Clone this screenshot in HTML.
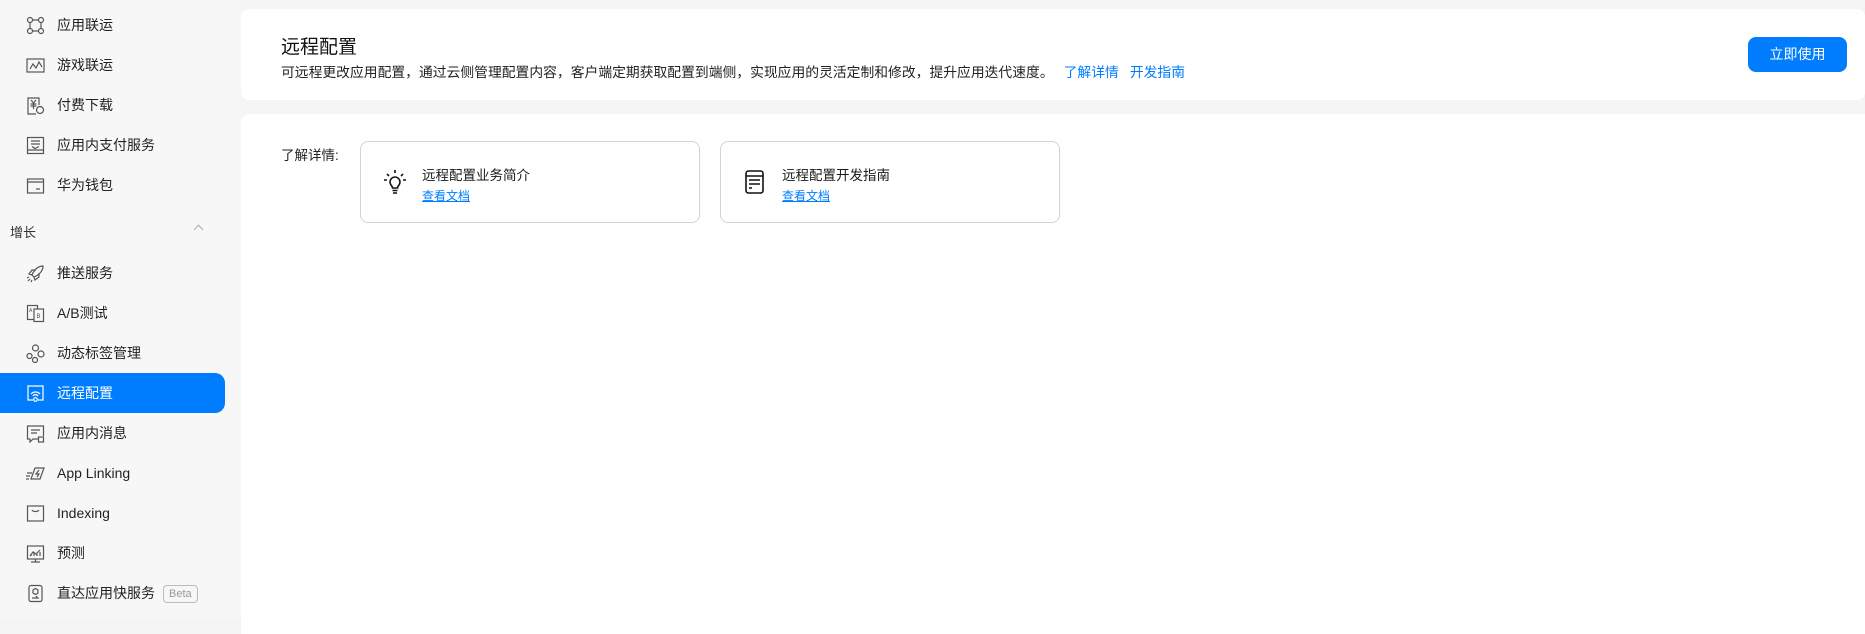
<!DOCTYPE html>
<html><head><meta charset="utf-8"><style>
*{margin:0;padding:0;box-sizing:border-box}
body{width:1865px;height:618px;background:#f5f5f5;font-family:"Liberation Sans","Noto Sans CJK SC",sans-serif;color:#191919;position:relative;overflow:hidden}
.side{position:absolute;left:0;top:0;width:241px;height:618px;background:#f7f7f7}
.it{position:absolute;left:0;width:225px;height:40px;font-size:14px;line-height:40px;padding-left:57px;color:#222}
.it svg{position:absolute;left:26px;top:11px;width:19px;height:19px;fill:none;stroke:#555;stroke-width:1.2}
.act{background:#007dff;color:#fff;border-radius:0 10px 10px 0}
.act svg{stroke:#fff}
.card{position:absolute;background:#fff;border-radius:8px}
.box{position:absolute;top:141px;width:340px;height:82px;border:1px solid #d4d4d4;border-radius:8px;background:#fff}
.box .t{position:absolute;left:61px;top:22px;font-size:13.5px;color:#191919}
.box .l{position:absolute;left:61px;top:45px;font-size:12px;color:#007dff;text-decoration:underline}
.box svg{position:absolute;left:22px;top:27px;width:24px;height:28px;fill:none;stroke:#111;stroke-width:1.6}
a{color:#007dff;text-decoration:none}
</style></head><body>
<div class="side">
<div class="it" style="top:5px"><svg viewBox="0 0 19 19"><circle cx="4" cy="4" r="2.5"/><circle cx="15" cy="4" r="2.5"/><circle cx="4" cy="15" r="2.5"/><circle cx="15" cy="15" r="2.5"/><path d="M6.5 4h6M6.5 15h6M4 6.5v6M15 6.5v6"/></svg>应用联运</div>
<div class="it" style="top:45px"><svg viewBox="0 0 19 19"><rect x="1" y="3" width="17" height="13"/><path d="M4 13l3-5 3 4 3-6 3 5"/></svg>游戏联运</div>
<div class="it" style="top:85px"><svg viewBox="0 0 19 19"><path d="M13 9V2H2v16h8"/><path d="M5 4l2.5 3L10 4M4.5 8h6M4.5 10h6M7.5 7v6"/><circle cx="14" cy="14" r="3.5"/></svg>付费下载</div>
<div class="it" style="top:125px"><svg viewBox="0 0 19 19"><rect x="1.5" y="1.5" width="16" height="16"/><path d="M1.5 14h16M5 5h9M5 8h9M6 10.5l3 2 4-2"/></svg>应用内支付服务</div>
<div class="it" style="top:165px"><svg viewBox="0 0 19 19"><rect x="1.5" y="3" width="16" height="14"/><path d="M1.5 6h16M10 13h4"/></svg>华为钱包</div>
<div style="position:absolute;left:10px;top:222px;font-size:13px;color:#333">增长</div>
<div style="position:absolute;left:195px;top:226px;width:7px;height:7px;border-left:1px solid #aaa;border-top:1px solid #aaa;transform:rotate(45deg)"></div>
<div class="it" style="top:253px"><svg viewBox="0 0 19 19"><path d="M17 2c-5 0-9 4-11 9l2 2c5-2 9-6 9-11zM6 11L3 10l3-4h4M8 13l1 3 4-3v-4M4 15l-2 2M6 16l-1 2M3 13l-2 1"/></svg>推送服务</div>
<div class="it" style="top:293px"><svg viewBox="0 0 19 19"><rect x="1.5" y="1.5" width="10" height="14"/><rect x="8" y="5" width="9.5" height="12.5" fill="#f7f7f7"/><text x="3" y="8" font-size="5" fill="#555" stroke="none">A</text><text x="10.5" y="14" font-size="6" fill="#555" stroke="none">B</text></svg>A/B测试</div>
<div class="it" style="top:333px"><svg viewBox="0 0 19 19"><circle cx="9.5" cy="4" r="3"/><circle cx="3.5" cy="12" r="2.5"/><circle cx="15" cy="10" r="3"/><circle cx="9" cy="16" r="2.5"/></svg>动态标签管理</div>
<div class="it act" style="top:373px"><svg viewBox="0 0 19 19" style="stroke:#fff"><path d="M7 16H2V2h15v14h-5"/><path d="M5 10a6 6 0 0 1 9 0M7 12a3 3 0 0 1 5 0"/><circle cx="9.5" cy="15.5" r="1.8"/></svg>远程配置</div>
<div class="it" style="top:413px"><svg viewBox="0 0 19 19"><path d="M13 15H7l-3 3v-3H1.5V2h16v10"/><path d="M5 6h9M5 9h6"/><rect x="12.5" y="13" width="5" height="5"/></svg>应用内消息</div>
<div class="it" style="top:453px"><svg viewBox="0 0 19 19"><path d="M5 15l4-11h9l-4 11zM1 9h5M0 12h4M0 15h3M13 6l-3 4h3l-2 3"/></svg>App Linking</div>
<div class="it" style="top:493px"><svg viewBox="0 0 19 19"><rect x="1.5" y="2" width="16" height="15"/><path d="M6 6c1 2 6 2 7 0"/></svg>Indexing</div>
<div class="it" style="top:533px"><svg viewBox="0 0 19 19"><rect x="1.5" y="2" width="16" height="13"/><path d="M4 12l3-4 3 2 4-4M9.5 15v3M5 18h9M5 12v-2M8 12v-3M11 12v-2M14 12v-4"/></svg>预测</div>
<div class="it" style="top:573px"><svg viewBox="0 0 19 19"><rect x="3" y="1.5" width="13" height="16" rx="2"/><path d="M7 6l2.5-1.5L12 6v3l-2.5 1.5L7 9zM6 14h6l-2-2"/></svg>直达应用快服务<span style="display:inline-block;margin-left:8px;height:18px;line-height:16px;padding:0 5px;border:1px solid #bbb;border-radius:4px;font-size:11px;color:#999;vertical-align:middle">Beta</span></div>
</div>
<div class="card" style="left:241px;top:9px;width:1624px;height:91px">
<div style="position:absolute;left:40px;top:23px;font-size:19px;color:#111">远程配置</div>
<div style="position:absolute;left:40px;top:52px;font-size:13.8px;color:#222;white-space:nowrap">可远程更改应用配置，通过云侧管理配置内容，客户端定期获取配置到端侧，实现应用的灵活定制和修改，提升应用迭代速度。<a style="margin-left:10px">了解详情</a><a style="margin-left:11px">开发指南</a></div>
<div style="position:absolute;left:1507px;top:28px;width:99px;height:35px;background:#007dff;border-radius:8px;color:#fff;font-size:14px;line-height:35px;text-align:center">立即使用</div>
</div>
<div class="card" style="left:241px;top:114px;width:1624px;height:520px;border-radius:8px 0 0 0"></div>
<div style="position:absolute;left:281px;top:144px;font-size:13.5px;color:#222">了解详情:</div>
<div class="box" style="left:360px"><svg viewBox="0 0 24 28"><path d="M8 16a5 5 0 1 1 8 0c-1 1-1.5 2-1.5 3h-5c0-1-.5-2-1.5-3z"/><path d="M9.5 21.5h5M10 24h4M12 1v3M4 5l2 2M20 5l-2 2M1 11h3M20 11h3"/></svg><div class="t">远程配置业务简介</div><div class="l">查看文档</div></div>
<div class="box" style="left:720px"><svg viewBox="0 0 24 28"><rect x="3" y="2" width="17" height="22" rx="2.5"/><path d="M3 7h17M6 11h11M6 15h11M6 19h3"/></svg><div class="t">远程配置开发指南</div><div class="l">查看文档</div></div>
</body></html>
